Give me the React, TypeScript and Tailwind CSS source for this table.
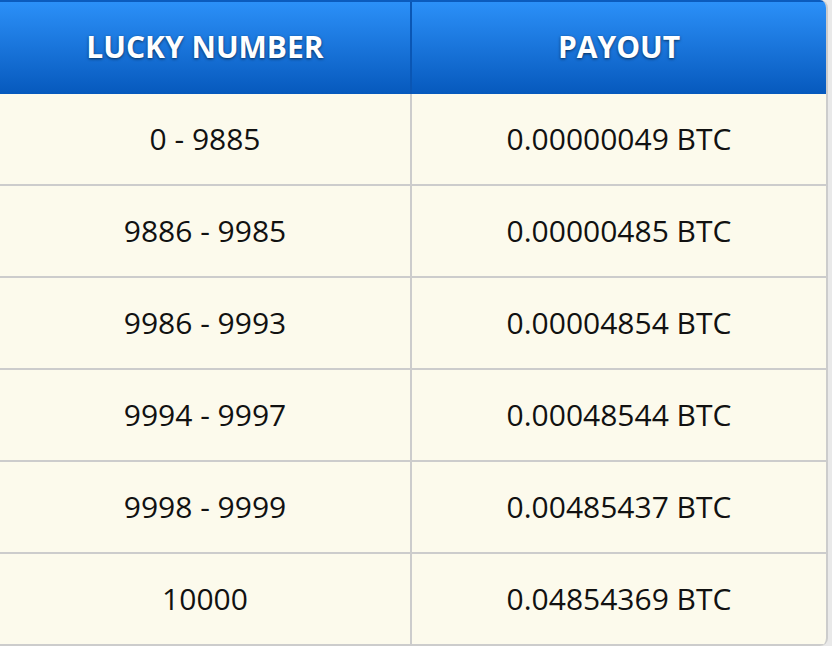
import React from "react";

interface PayoutRow {
    range: string;
    payout: string;
}

const rows: PayoutRow[] = [
    { range: "0 - 9885", payout: "0.00000049 BTC" },
    { range: "9886 - 9985", payout: "0.00000485 BTC" },
    { range: "9986 - 9993", payout: "0.00004854 BTC" },
    { range: "9994 - 9997", payout: "0.00048544 BTC" },
    { range: "9998 - 9999", payout: "0.00485437 BTC" },
    { range: "10000", payout: "0.04854369 BTC" },
];

const App: React.FC = () => {
    return (
        <div className="w-[832px] h-[646px] bg-[#e9e9e9] overflow-hidden font-['Open_Sans',sans-serif]">
            <div className="-ml-[2px] w-[830px] border-r-2 border-l-2 border-[#cccccc] rounded-r-[8px] overflow-hidden bg-[#fcfaec]">
                <div className="grid grid-cols-[412px_1fr] h-[94px] border-t-2 border-[#0b5bbd] bg-gradient-to-b from-[#2b90f8] to-[#0659bd] text-white text-[30px] font-bold [text-shadow:0_1px_3px_rgba(0,0,0,0.6)]">
                    <div className="flex items-center justify-center border-r-2 border-[#0a56b4] pb-[4px]">
                        LUCKY NUMBER
                    </div>
                    <div className="flex items-center justify-center pb-[4px]">
                        PAYOUT
                    </div>
                </div>
                {rows.map((row) => (
                    <div
                        key={row.range}
                        className="grid grid-cols-[412px_1fr] h-[92px] border-b-2 border-[#cccccc] text-[30px] text-[#111111]"
                    >
                        <div className="flex items-center justify-center border-r-2 border-[#cccccc] pb-[2px]">
                            {row.range}
                        </div>
                        <div className="flex items-center justify-center pb-[2px]">
                            {row.payout}
                        </div>
                    </div>
                ))}
            </div>
        </div>
    );
};

export default App;
